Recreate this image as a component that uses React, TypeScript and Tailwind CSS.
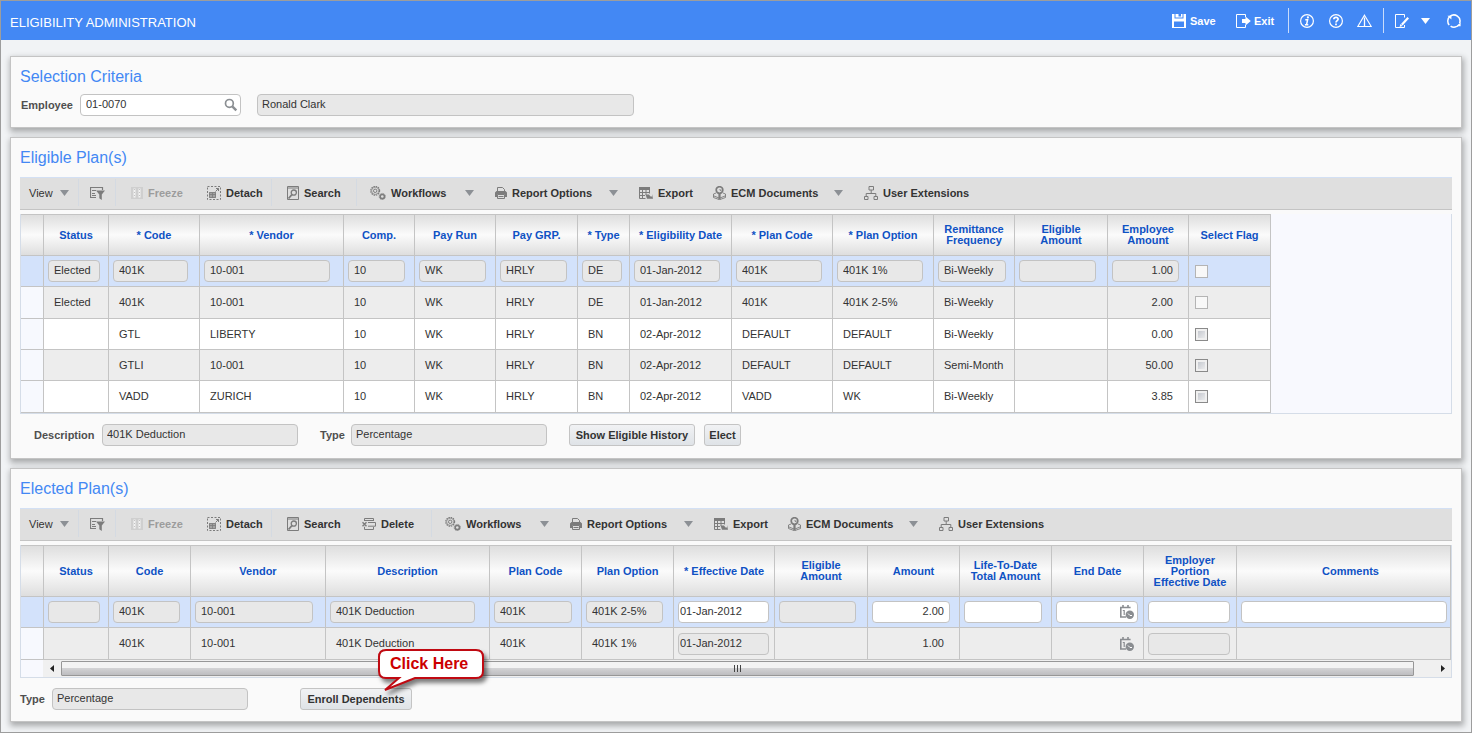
import type { ReactNode } from 'react';
import clsx from 'clsx';

type Column = {
    label: string;
    col: string;
    field: string;
    align?: 'right';
    flush?: boolean;
};

type Cell = { value?: string; kind?: 'plain' | 'readonly' | 'edit'; date?: boolean };

const eligibleColumns: Column[] = [
    { label: 'Status', col: 'w-[65px]', field: 'w-[52px]' },
    { label: '* Code', col: 'w-[91px]', field: 'w-[75px]' },
    { label: '* Vendor', col: 'w-[144px]', field: 'w-[126px]' },
    { label: 'Comp.', col: 'w-[71px]', field: 'w-[57px]' },
    { label: 'Pay Run', col: 'w-[81px]', field: 'w-[67px]' },
    { label: 'Pay GRP.', col: 'w-[82px]', field: 'w-[67px]' },
    { label: '* Type', col: 'w-[52px]', field: 'w-[40px]' },
    { label: '* Eligibility Date', col: 'w-[102px]', field: 'w-[86px]' },
    { label: '* Plan Code', col: 'w-[101px]', field: 'w-[86px]' },
    { label: '* Plan Option', col: 'w-[101px]', field: 'w-[86px]' },
    { label: 'Remittance\nFrequency', col: 'w-[81px]', field: 'w-[68px]' },
    { label: 'Eligible\nAmount', col: 'w-[93px]', field: 'w-[77px]' },
    { label: 'Employee\nAmount', col: 'w-[81px]', field: 'w-[67px]', align: 'right' },
];

const eligibleRows = [
    ['Elected', '401K', '10-001', '10', 'WK', 'HRLY', 'DE', '01-Jan-2012', '401K', '401K 1%', 'Bi-Weekly', '', '1.00'],
    ['Elected', '401K', '10-001', '10', 'WK', 'HRLY', 'DE', '01-Jan-2012', '401K', '401K 2-5%', 'Bi-Weekly', '', '2.00'],
    ['', 'GTL', 'LIBERTY', '10', 'WK', 'HRLY', 'BN', '02-Apr-2012', 'DEFAULT', 'DEFAULT', 'Bi-Weekly', '', '0.00'],
    ['', 'GTLI', '10-001', '10', 'WK', 'HRLY', 'BN', '02-Apr-2012', 'DEFAULT', 'DEFAULT', 'Semi-Month', '', '50.00'],
    ['', 'VADD', 'ZURICH', '10', 'WK', 'HRLY', 'BN', '02-Apr-2012', 'VADD', 'WK', 'Bi-Weekly', '', '3.85'],
];

const rowHeights = ['h-[31px]', 'h-[32px]', 'h-[31px]', 'h-[31px]', 'h-[32px]'];

const electedColumns: Column[] = [
    { label: 'Status', col: 'w-[65px]', field: 'w-[52px]' },
    { label: 'Code', col: 'w-[82px]', field: 'w-[67px]' },
    { label: 'Vendor', col: 'w-[135px]', field: 'w-[118px]' },
    { label: 'Description', col: 'w-[164px]', field: 'w-[145px]' },
    { label: 'Plan Code', col: 'w-[92px]', field: 'w-[78px]' },
    { label: 'Plan Option', col: 'w-[92px]', field: 'w-[77px]' },
    { label: '* Effective Date', col: 'w-[101px]', field: 'w-[91px]', flush: true },
    { label: 'Eligible\nAmount', col: 'w-[93px]', field: 'w-[77px]' },
    { label: 'Amount', col: 'w-[92px]', field: 'w-[78px]', align: 'right' },
    { label: 'Life-To-Date\nTotal Amount', col: 'w-[92px]', field: 'w-[78px]' },
    { label: 'End Date', col: 'w-[92px]', field: 'w-[82px]' },
    { label: 'Employer\nPortion\nEffective Date', col: 'w-[93px]', field: 'w-[82px]' },
    { label: 'Comments', col: 'w-auto', field: 'w-full' },
];

const electedRows: Cell[][] = [
    [
        { kind: 'readonly' },
        { value: '401K', kind: 'readonly' },
        { value: '10-001', kind: 'readonly' },
        { value: '401K Deduction', kind: 'readonly' },
        { value: '401K', kind: 'readonly' },
        { value: '401K 2-5%', kind: 'readonly' },
        { value: '01-Jan-2012', kind: 'edit' },
        { kind: 'readonly' },
        { value: '2.00', kind: 'edit' },
        { kind: 'edit' },
        { kind: 'edit', date: true },
        { kind: 'edit' },
        { kind: 'edit' },
    ],
    [
        {},
        { value: '401K' },
        { value: '10-001' },
        { value: '401K Deduction' },
        { value: '401K' },
        { value: '401K 1%' },
        { value: '01-Jan-2012', kind: 'readonly' },
        {},
        { value: '1.00' },
        {},
        { date: true },
        { kind: 'readonly' },
        {},
    ],
];

const inputClass = 'h-[22px] rounded-[4px] border border-[#c3c3c3] pb-[2px] text-[11px] text-[#333] outline-none';

function Svg({ children, w = 14, className }: { children: ReactNode; w?: number; className?: string }) {
    return (
        <svg
            width={w}
            height="14"
            viewBox={`0 0 ${w} 14`}
            fill="none"
            stroke="currentColor"
            className={clsx('shrink-0', className)}
            aria-hidden="true"
        >
            {children}
        </svg>
    );
}

const Caret = ({ className }: { className?: string }) => (
    <svg width="9" height="6" viewBox="0 0 9 6" className={clsx('shrink-0', className)} aria-hidden="true">
        <path d="M0 0h9L4.5 6z" fill="currentColor" />
    </svg>
);

const SaveIcon = () => (
    <Svg>
        <path d="M0 0h2.5v4.5h9V0H14v14H0z" fill="currentColor" stroke="none" />
        <path d="M3.5 0h3v3.5h-3zM9 0h1.5v3.5H9zM6.5 2.5h3v1h-3z" fill="currentColor" stroke="none" />
        <path d="M2 7.5h10V13H2z" fill="#4388f4" stroke="none" />
    </Svg>
);

const ExitIcon = () => (
    <Svg w={15}>
        <path d="M9.5 3V.5h-9v13h9V11" />
        <path d="M6 5h3.5V2.5L14.8 7l-5.3 4.5V9H6z" fill="currentColor" stroke="none" />
    </Svg>
);

const InfoIcon = () => (
    <Svg>
        <circle cx="7" cy="7" r="6.4" strokeWidth="1.2" />
        <path d="M5.3 5.8h2.3l-1 4.7M4.9 10.7h3.4" strokeWidth="1.5" />
        <circle cx="7.9" cy="3.4" r="1.1" fill="currentColor" stroke="none" />
    </Svg>
);

const HelpIcon = () => (
    <Svg>
        <circle cx="7" cy="7" r="6.4" strokeWidth="1.2" />
        <path d="M4.8 5.3C5 2.5 9.3 2.9 9.1 5.2 9 6.6 7 6.7 7 8.6" strokeWidth="1.7" />
        <path d="M6.1 9.6h1.8v1.7H6.1z" fill="currentColor" stroke="none" />
    </Svg>
);

const WarningIcon = () => (
    <Svg w={15}>
        <path d="M7.5 1.2 14.2 12.5H.8z" strokeWidth="1.1" />
        <path d="M7.5 3.5v9" strokeWidth="1.3" />
    </Svg>
);

const NotesIcon = () => (
    <Svg>
        <path d="M9.5 3.5V.5h-9v13h9v-2.5" />
        <path d="m13.2 3.8-6.4 7" strokeWidth="2.2" />
        <path d="m4.6 13 .8-3 2.1 1.9z" fill="currentColor" stroke="none" />
    </Svg>
);

const RefreshIcon = () => (
    <Svg>
        <path d="M2.2 11A6.1 6.1 0 0 1 3 2.4 6.1 6.1 0 0 1 12.6 9.2M12 10.6A6.1 6.1 0 0 1 3.6 12.1" strokeWidth="1.5" />
        <path d="M.4 1.8h4v3.6zM13.6 12.2h-4l4-3.6z" fill="currentColor" stroke="none" />
    </Svg>
);

const FilterIcon = () => (
    <Svg w={15}>
        <path d="M0 1.5h13M.5 1v11M0 11.5h6M2 4.5h4M2 7.5h3M2 9.5h4M12.5 1v3" strokeWidth="1.2" />
        <path d="M6 4.5h9l-3.2 4V14L9.3 12.3V8.5z" fill="currentColor" stroke="none" />
    </Svg>
);

const FreezeIcon = () => (
    <Svg w={12}>
        <path d="M0 1h12v12H0z" fill="#cfcfcf" stroke="none" />
        <path d="M3.5 2.5v9M8.5 2.5v9" stroke="#f3f3f3" strokeWidth="2" />
        <path d="M3.5 3v8M8.5 3v8" stroke="#c4c4c4" strokeDasharray="1 2" />
    </Svg>
);

const DetachIcon = () => (
    <Svg>
        <path d="M.5.5h13v13H.5z" strokeDasharray="2 1.5" />
        <path d="M2 6h7v6H2z" fill="#a3a3a3" stroke="none" />
        <path d="M2.5 6.5h6v5h-6zM2 8.5h7M5.5 7v5" strokeWidth=".8" />
        <path d="m8.5 5.5 3-3M9 2.5h2.5V5" />
    </Svg>
);

const SearchIcon = () => (
    <Svg w={12}>
        <path d="M.5.5h11v13H.5zM0 2h12" />
        <circle cx="6.8" cy="6.6" r="2.6" strokeWidth="1.3" />
        <path d="M5 8.5 1.5 12.5" strokeWidth="1.8" />
    </Svg>
);

const DeleteIcon = () => (
    <Svg>
        <path d="M2.5 4V1.5h9V4M2.5 9.8v2.7h9V10M6 5.5h7.5v3.7H6M2.5 3.5h9" />
        <path d="m.5 5.2 4 4M4.5 5.2l-4 4" strokeWidth="1.4" />
    </Svg>
);

const WorkflowIcon = () => (
    <Svg w={16}>
        <circle cx="5.2" cy="4.8" r="4.4" strokeWidth="1.2" strokeDasharray="1.5 .8" />
        <circle cx="5.2" cy="4.8" r="3.6" strokeWidth=".7" />
        <circle cx="5.2" cy="4.8" r="1.7" />
        <circle cx="12.3" cy="10.5" r="2.1" strokeWidth="1.5" />
        <circle cx="12.3" cy="10.5" r="3.1" strokeWidth=".9" strokeDasharray="1.2 .7" />
    </Svg>
);

const PrinterIcon = () => (
    <Svg w={12}>
        <path d="M2.5 5V1.5h5l2 2V5" />
        <path d="M1.5 5h9l1.5 1.5V11H10V8.5H2V11H0V6.5z" fill="currentColor" stroke="none" />
        <path d="M2.5 8.5v4h7v-4zM3.5 10.5h5" />
    </Svg>
);

const ExportIcon = () => (
    <Svg>
        <path d="M0 1h11v3H0z" fill="currentColor" stroke="none" />
        <path d="M.5 1.5h10v6M.5 1v11.5h6M0 6.5h10M0 9.5h6M3.5 4v8M7 4v5" />
        <path d="M6.5 8.5H10l1.5 2H13V8l1 4.8H8z" fill="currentColor" stroke="none" />
    </Svg>
);

const EcmIcon = () => (
    <Svg w={13}>
        <path d="M3 7 .5 8v3.5l6 2.2 6-2.2V8L10 7M.5 9.8l6 2.4 6-2.4" strokeWidth=".9" />
        <path d="M6.5 7v6.5" strokeWidth="2.2" />
        <circle cx="6.5" cy="4" r="3.3" strokeWidth="1.7" />
        <path d="M5.8 3.5h2.5v2z" fill="currentColor" stroke="none" />
    </Svg>
);

const TreeIcon = () => (
    <Svg>
        <path d="M5 .5h4.5v3.5H5zM.5 10.5H4v3H.5zM10 10.5h3.5v3H10zM7.2 4v3.5M2.2 10.5v-3h9.6v3" />
    </Svg>
);

const CalendarIcon = () => (
    <Svg className="text-[#8a8d91]">
        <path d="M.8 12.5V2.5h9.8M0 12h6M3 0v3M8 0v3" strokeWidth="1.6" />
        <path d="M2.8 5.5h1.4V10" strokeWidth="1.2" />
        <circle cx="9.8" cy="9.8" r="4.2" fill="currentColor" stroke="none" />
        <path d="m8 8.5 2 2h2" stroke="#fff" />
    </Svg>
);

function ToolButton({
    icon,
    label,
    className,
    menu,
    disabled,
}: {
    icon: ReactNode;
    label: string;
    className?: string;
    menu?: boolean;
    disabled?: boolean;
}) {
    return (
        <button
            type="button"
            disabled={disabled}
            className={clsx(
                'flex h-full shrink-0 items-center gap-[5px] font-bold whitespace-nowrap',
                disabled ? 'text-[#9c9c9c]' : 'text-[#333]',
                className,
            )}
        >
            <span className="text-[#7c7c7c]">{icon}</span>
            {label}
            {menu && <Caret className="mr-[21px] ml-auto text-[#8c9095]" />}
        </button>
    );
}

const Separator = ({ className }: { className?: string }) => (
    <div className={clsx('h-[27px] w-px shrink-0 bg-[#d4dae2]', className)} />
);

function Toolbar({ withDelete }: { withDelete?: boolean }) {
    return (
        <div className="mt-[2px] mb-[4px] flex h-[33px] items-center overflow-hidden border-t border-b border-t-[#d3e0f4] border-b-[#c4c4c4] bg-[#dfdfdf] pb-[2px]">
            <button type="button" className="flex h-full w-[58px] shrink-0 items-center gap-[7px] pl-[9px] text-[#333]">
                View
                <Caret className="text-[#8c9095]" />
            </button>
            <Separator />
            <button type="button" aria-label="Query by example" className="w-[36px] shrink-0 pl-[11px] text-[#7c7c7c]">
                <FilterIcon />
            </button>
            <Separator className="mr-[15px]" />
            <ToolButton icon={<FreezeIcon />} label="Freeze" className="w-[76px]" disabled />
            <ToolButton icon={<DetachIcon />} label="Detach" className="w-[64px]" />
            <Separator className="mr-[15px]" />
            <ToolButton icon={<SearchIcon />} label="Search" className={withDelete ? 'w-[75px]' : 'w-[69px]'} />
            {withDelete && <ToolButton icon={<DeleteIcon />} label="Delete" className="w-[69px]" />}
            <Separator className="mr-[13px]" />
            <ToolButton icon={<WorkflowIcon />} label="Workflows" className="w-[125px]" menu />
            <ToolButton icon={<PrinterIcon />} label="Report Options" className="w-[144px]" menu />
            <ToolButton icon={<ExportIcon />} label="Export" className="w-[74px]" />
            <ToolButton icon={<EcmIcon />} label="ECM Documents" className="w-[151px]" menu />
            <ToolButton icon={<TreeIcon />} label="User Extensions" />
        </div>
    );
}

function Field({ cell, column }: { cell: Cell; column: Column }) {
    const kind = cell.kind ?? 'plain';
    const shape = clsx(column.field, column.align === 'right' && 'text-right', column.flush ? 'pr-[5px] pl-px' : 'px-[5px]');
    return (
        <div className={clsx('relative', column.field)}>
            {kind === 'plain' ? (
                <div className={clsx('border border-transparent pb-px whitespace-nowrap', shape)}>
                    {cell.value || '\u00a0'}
                </div>
            ) : (
                <input
                    aria-label={column.label.replace('* ', '')}
                    defaultValue={cell.value ?? ''}
                    readOnly={kind === 'readonly'}
                    className={clsx(inputClass, 'block', kind === 'edit' ? 'bg-white' : 'bg-[#e8e8e8]', shape)}
                />
            )}
            {cell.date && (
                <button type="button" aria-label="Pick date" className="absolute inset-y-0 right-[4px] flex items-center">
                    <CalendarIcon />
                </button>
            )}
        </div>
    );
}

function HeadCell({ label, className = 'p-0' }: { label?: string; className?: string }) {
    return (
        <th
            scope="col"
            className={clsx(
                'border-t border-r border-b border-[#c4c4c4] bg-linear-to-b from-[#dedede] via-[#fbfbfb] to-[#dedede] text-center leading-[11px] font-bold whitespace-pre-line text-[#0f52c4]',
                className,
            )}
        >
            {label}
        </th>
    );
}

const rowColor = (i: number) => (i === 0 ? 'bg-[#d3e2fb]' : i % 2 ? 'bg-[#ededed]' : 'bg-white');
const cellClass = 'border-r border-b border-[#c4c4c4] py-0 pr-0 pl-[4px] align-middle';

function RowHeader({ selected }: { selected: boolean }) {
    return <td className={clsx('border-r border-b border-[#c4c4c4] p-0', !selected && 'bg-[#f7f9fe]')} />;
}

function EligibleTable() {
    return (
        <div className="overflow-hidden border-x border-b border-[#d5dde8] bg-[#f8f9fe]">
            <table className="w-[1250px] table-fixed border-separate border-spacing-0">
                <colgroup>
                    <col className="w-[23px]" />
                    {eligibleColumns.map((c) => (
                        <col key={c.label} className={c.col} />
                    ))}
                    <col className="w-[82px]" />
                </colgroup>
                <thead>
                    <tr className="h-[42px]">
                        <HeadCell />
                        {eligibleColumns.map((c) => (
                            <HeadCell key={c.label} label={c.label} />
                        ))}
                        <HeadCell label="Select Flag" />
                    </tr>
                </thead>
                <tbody>
                    {eligibleRows.map((row, i) => (
                        <tr key={i} className={clsx(rowHeights[i], rowColor(i))}>
                            <RowHeader selected={i === 0} />
                            {row.map((value, j) => (
                                <td key={j} className={cellClass}>
                                    <Field cell={{ value, kind: i === 0 ? 'readonly' : 'plain' }} column={eligibleColumns[j]} />
                                </td>
                            ))}
                            <td className={cellClass}>
                                <input
                                    type="checkbox"
                                    aria-label="Select Flag"
                                    disabled={i < 2}
                                    className={clsx(
                                        'ml-[2px] block size-[13px] appearance-none border',
                                        i < 2
                                            ? 'border-[#b4b4b4] bg-[#f8f8f8]'
                                            : 'border-[#8a8a8a] bg-linear-to-br from-[#bcc0c8] to-[#f4f4f4] shadow-[inset_0_0_0_2px_#f0f0f0]',
                                    )}
                                />
                            </td>
                        </tr>
                    ))}
                </tbody>
            </table>
        </div>
    );
}

function ElectedTable() {
    return (
        <div className="overflow-hidden border-x border-b border-[#d5dde8] bg-[#f8f9fe]">
            <table className="w-full table-fixed border-separate border-spacing-0">
                <colgroup>
                    <col className="w-[23px]" />
                    {electedColumns.map((c) => (
                        <col key={c.label} className={c.col} />
                    ))}
                </colgroup>
                <thead>
                    <tr className="h-[52px]">
                        <HeadCell />
                        {electedColumns.map((c) => (
                            <HeadCell
                                key={c.label}
                                label={c.label}
                                className={c.label === 'Comments' ? 'py-0 pr-0 pl-[14px]' : 'p-0'}
                            />
                        ))}
                    </tr>
                </thead>
                <tbody>
                    {electedRows.map((row, i) => (
                        <tr key={i} className={clsx(rowHeights[i], rowColor(i))}>
                            <RowHeader selected={i === 0} />
                            {row.map((cell, j) => (
                                <td key={j} className={clsx(cellClass, j === row.length - 1 && 'pr-[3px]')}>
                                    <Field cell={cell} column={electedColumns[j]} />
                                </td>
                            ))}
                        </tr>
                    ))}
                </tbody>
            </table>
            <div className="flex h-[17px] pl-[22px]">
                <div className="flex flex-1 items-center bg-[#f0f0f0]">
                    <button type="button" aria-label="Scroll left" className="flex w-[18px] justify-center">
                        <svg width="4" height="7" viewBox="0 0 4 7" aria-hidden="true">
                            <path d="M4 0v7L0 3.5z" fill="#222" />
                        </svg>
                    </button>
                    <div className="flex h-[15px] flex-1 items-center justify-center gap-[2px] rounded-[1px] border border-[#979797] bg-linear-to-b from-[#f3f3f3] from-45% via-[#d2d2d4] via-50% to-[#bdbdc0]">
                        <span className="h-[7px] w-px bg-[#444]" />
                        <span className="h-[7px] w-px bg-[#444]" />
                        <span className="h-[7px] w-px bg-[#444]" />
                    </div>
                    <button type="button" aria-label="Scroll right" className="flex w-[37px] justify-end pr-[6px]">
                        <svg width="4" height="7" viewBox="0 0 4 7" aria-hidden="true">
                            <path d="M0 0v7l4-3.5z" fill="#222" />
                        </svg>
                    </button>
                </div>
            </div>
        </div>
    );
}

function Panel({ title, className, children }: { title: string; className: string; children: ReactNode }) {
    return (
        <section
            className={clsx(
                'border border-[#c4c4c4] bg-[#fafafa] px-[9px] shadow-[1px_3px_6px_1px_rgba(0,0,0,0.3)]',
                className,
            )}
        >
            <h2 className="flex h-[37px] items-center pt-[2px] text-[16px] text-[#4388f4]">{title}</h2>
            {children}
        </section>
    );
}

function FormButton({ children, className }: { children: ReactNode; className: string }) {
    return (
        <button
            type="button"
            className={clsx(
                'h-[22px] rounded-[3px] border border-[#c4c4c4] bg-linear-to-b from-[#f1f2f4] to-[#dfe3e7] pb-px text-center font-bold whitespace-nowrap text-[#333]',
                className,
            )}
        >
            {children}
        </button>
    );
}

function ReadOnlyField({ id, value, className }: { id: string; value: string; className: string }) {
    return <input id={id} readOnly defaultValue={value} className={clsx(inputClass, 'bg-[#e8e8e8] px-[4px]', className)} />;
}

function Callout() {
    return (
        <div className="pointer-events-none absolute -top-[40px] left-[77px] h-[46px] w-[114px]">
            <svg width="114" height="46" viewBox="0 0 114 46" aria-hidden="true" className="drop-shadow-[3px_4px_2px_rgba(0,0,0,0.5)]">
                <path
                    d="M9 2h90q7 0 7 7v14q0 7-7 7H38L8 42 22 30H9q-7 0-7-7V9q0-7 7-7z"
                    fill="#fff"
                    stroke="#c00a12"
                    strokeWidth="2"
                />
            </svg>
            <span className="absolute inset-x-0 top-0 pl-[13px] text-[16px] leading-[32px] font-bold whitespace-nowrap text-[#cc0000]">
                Click Here
            </span>
        </div>
    );
}

export default function App() {
    return (
        <div className="min-h-screen border border-[#9d9d9d] bg-[#f1f3f5] pb-[10px] font-['Liberation_Sans',Arial,sans-serif] text-[11px] leading-[14px] text-[#333]">
            <header className="flex h-[39px] items-center bg-[#4388f4] pr-[10px] pl-[9px] text-white">
                <h1 className="mr-auto pt-[4px] text-[13px]">ELIGIBILITY ADMINISTRATION</h1>
                <div className="flex items-center">
                    <button type="button" className="flex w-[64px] items-center gap-[4px] font-bold">
                        <SaveIcon />
                        Save
                    </button>
                    <button type="button" className="flex w-[52px] items-center gap-[3px] font-bold">
                        <ExitIcon />
                        Exit
                    </button>
                    <div className="h-[25px] w-px bg-[#c9dcfb]" />
                    <button type="button" aria-label="Information" className="ml-[11px]">
                        <InfoIcon />
                    </button>
                    <button type="button" aria-label="Help" className="ml-[15px]">
                        <HelpIcon />
                    </button>
                    <button type="button" aria-label="Warnings" className="ml-[14px]">
                        <WarningIcon />
                    </button>
                    <div className="ml-[11px] h-[25px] w-px bg-[#c9dcfb]" />
                    <button type="button" aria-label="Notes" className="ml-[11px]">
                        <NotesIcon />
                    </button>
                    <button type="button" aria-label="Notes menu" className="ml-[12px]">
                        <Caret />
                    </button>
                    <button type="button" aria-label="Refresh" className="ml-[17px]">
                        <RefreshIcon />
                    </button>
                </div>
            </header>

            <main className="flex flex-col gap-[9px] px-[9px] pt-[16px]">
                <Panel title="Selection Criteria" className="pb-[11px]">
                    <div className="flex items-center">
                        <label htmlFor="employee" className="w-[60px] pb-px pl-px font-bold text-[#4f4f4f]">
                            Employee
                        </label>
                        <div className="relative mr-[16px] w-[161px]">
                            <input
                                id="employee"
                                defaultValue="01-0070"
                                className={clsx(inputClass, 'block w-full bg-white pr-[20px] pl-[5px]')}
                            />
                            <button type="button" aria-label="Find employee" className="absolute inset-y-0 right-[3px] flex items-center text-[#8b8f93]">
                                <Svg>
                                    <circle cx="5.4" cy="5.4" r="3.9" strokeWidth="1.7" />
                                    <path d="m8.3 8.3 4 4" strokeWidth="2.4" />
                                </Svg>
                            </button>
                        </div>
                        <input
                            aria-label="Employee name"
                            readOnly
                            defaultValue="Ronald Clark"
                            className={clsx(inputClass, 'w-[377px] bg-[#e8e8e8] px-[4px]')}
                        />
                    </div>
                </Panel>

                <Panel title="Eligible Plan(s)" className="pb-[12px]">
                    <Toolbar />
                    <EligibleTable />
                    <div className="mt-[10px] flex items-center pl-[14px]">
                        <label htmlFor="description" className="w-[68px] font-bold text-[#4f4f4f]">
                            Description
                        </label>
                        <ReadOnlyField id="description" value="401K Deduction" className="mr-[22px] w-[196px]" />
                        <label htmlFor="eligible-type" className="w-[31px] font-bold text-[#4f4f4f]">
                            Type
                        </label>
                        <ReadOnlyField id="eligible-type" value="Percentage" className="mr-[22px] w-[196px]" />
                        <FormButton className="mr-[9px] w-[126px]">Show Eligible History</FormButton>
                        <FormButton className="w-[37px]">Elect</FormButton>
                    </div>
                </Panel>

                <Panel title="Elected Plan(s)" className="pb-[11px]">
                    <Toolbar withDelete />
                    <ElectedTable />
                    <div className="mt-[10px] flex items-center">
                        <label htmlFor="elected-type" className="w-[32px] font-bold text-[#4f4f4f]">
                            Type
                        </label>
                        <ReadOnlyField id="elected-type" value="Percentage" className="mr-[52px] w-[196px]" />
                        <div className="relative">
                            <FormButton className="w-[112px]">Enroll Dependents</FormButton>
                            <Callout />
                        </div>
                    </div>
                </Panel>
            </main>
        </div>
    );
}
